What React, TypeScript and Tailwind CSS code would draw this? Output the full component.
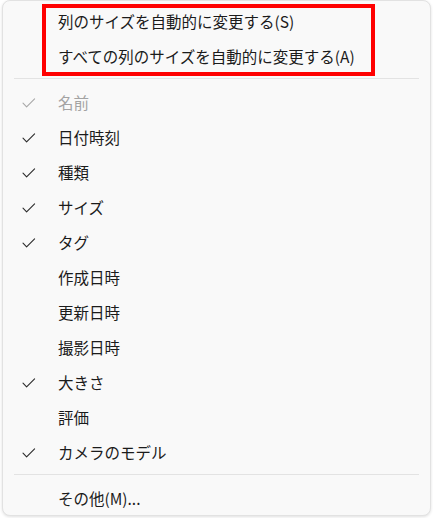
import { Fragment } from "react";

type Item = { label: string; checked?: boolean; disabled?: boolean };

const topItems: Item[] = [
  { label: "列のサイズを自動的に変更する(S)" },
  { label: "すべての列のサイズを自動的に変更する(A)" },
];

const columnItems: Item[] = [
  { label: "名前", checked: true, disabled: true },
  { label: "日付時刻", checked: true },
  { label: "種類", checked: true },
  { label: "サイズ", checked: true },
  { label: "タグ", checked: true },
  { label: "作成日時" },
  { label: "更新日時" },
  { label: "撮影日時" },
  { label: "大きさ", checked: true },
  { label: "評価" },
  { label: "カメラのモデル", checked: true },
];

function Check({ muted }: { muted?: boolean }) {
  return (
    <svg width="14" height="10" viewBox="0 0 14 10" fill="none">
      <path
        d="M1 5.2 L4.6 8.8 L12.6 0.8"
        stroke={muted ? "#a8a8a8" : "#2b2b2b"}
        strokeWidth="1.1"
        strokeLinecap="round"
        strokeLinejoin="round"
      />
    </svg>
  );
}

function Row({ item }: { item: Item }) {
  return (
    <div className="flex items-center h-[35px]">
      <div className="w-[55px] pl-[19px] flex items-center">
        {item.checked && <Check muted={item.disabled} />}
      </div>
      <span className={item.disabled ? "text-[#a3a3a3]" : "text-[#1b1b1b]"}>
        {item.label}
      </span>
    </div>
  );
}

function Separator() {
  return (
    <div className="pt-[4px] pb-[6px] px-[11px]">
      <div className="h-px bg-[#e3e3e3]" />
    </div>
  );
}

export default function App() {
  return (
    <div
      className="w-[433px] h-[518px] bg-white overflow-hidden"
      style={{ fontFamily: '"Noto Sans CJK JP", "Noto Sans", sans-serif' }}
    >
      <div className="relative ml-[2px] w-[429px] h-[516px] rounded-lg border border-[#e2e2e2] bg-[#f9f9f9] pt-[3px] text-[15.5px] shadow-[0_1px_3px_rgba(0,0,0,0.12)]">
        {topItems.map((item) => (
          <Row key={item.label} item={item} />
        ))}
        <Separator />
        {columnItems.map((item) => (
          <Fragment key={item.label}>
            <Row item={item} />
          </Fragment>
        ))}
        <Separator />
        <Row item={{ label: "その他(M)..." }} />

        <div className="absolute left-[39px] top-[3px] w-[333px] h-[72px] border-4 border-[#ff0000]" />
      </div>
    </div>
  );
}
